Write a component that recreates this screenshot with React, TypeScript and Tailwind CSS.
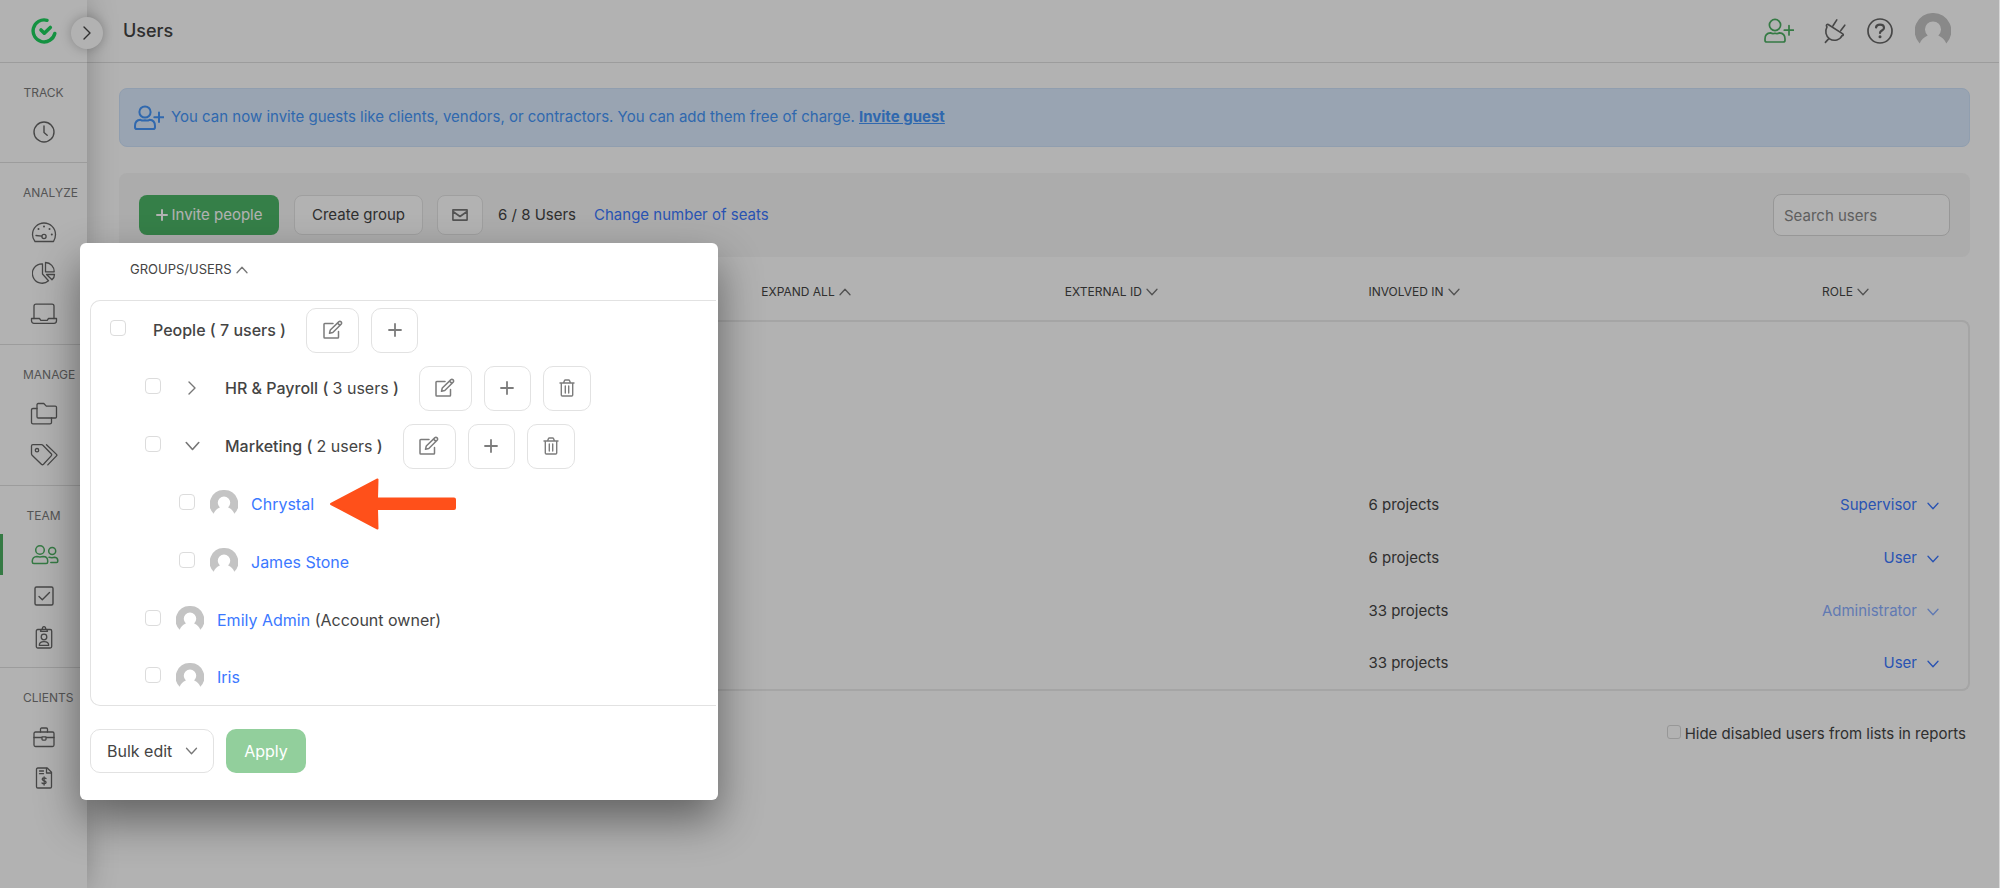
import type { ReactNode } from 'react'

type IconProps = { className?: string }

function Svg({ className = '', box = '0 0 24 24', width = 1.5, children }: { className?: string; box?: string; width?: number; children: ReactNode }) {
  return (
    <svg className={className} viewBox={box} fill="none" stroke="currentColor" strokeWidth={width} strokeLinecap="round" strokeLinejoin="round" aria-hidden="true">
      {children}
    </svg>
  )
}

const ChevronDown = ({ className }: IconProps) => (
  <Svg className={className} box="0 0 12 8" width={1.3}><path d="M1 1.2 6 6.8 11 1.2" /></Svg>
)
const ChevronUp = ({ className }: IconProps) => (
  <Svg className={className} box="0 0 12 8" width={1.3}><path d="M1 6.8 6 1.2 11 6.8" /></Svg>
)
const ChevronRight = ({ className }: IconProps) => (
  <Svg className={className} box="0 0 8 14" width={1.4}><path d="M1 1 7 7 1 13" /></Svg>
)

const UserPlus = ({ className, width = 1.7 }: IconProps & { width?: number }) => (
  <Svg className={className} box="0 0 30 26" width={width}>
    <circle cx="11" cy="7" r="5.6" />
    <path d="M6.5 14.8C3 15 1 17.5 1 21v1.2c0 1.2.7 1.8 1.8 1.8h16.4c1.1 0 1.8-.6 1.8-1.8V21c0-3.5-2-6-5.5-6.2-1.5.9-3 .9-4.5.4-1.5.5-3 .5-4.5-.4Z" />
    <path d="M25 7.5v9.5M20.3 12.2H29.7" />
  </Svg>
)

const Clock = () => (
  <Svg className="size-6" width={1.4}><circle cx="12" cy="12" r="10" /><path d="M12 6v6.5l3.2 2.7" /></Svg>
)
const Gauge = () => (
  <Svg className="size-7" box="0 0 28 28" width={1.3}>
    <path d="M5 23.5c-1.8-2.2-2.5-4.5-2.5-7A11.5 11.5 0 0 1 25.5 16.5c0 2.5-.7 4.8-2 7Z" />
    <circle cx="14" cy="18.5" r="2.1" />
    <path d="M6 17.5l5.8.7" />
    <path d="M8.5 11h.01M14 8.5h.01M19.5 11h.01M21.8 16.5h.01" strokeWidth="2" />
  </Svg>
)
const Pie = () => (
  <Svg className="size-6" width={1.3}>
    <path d="M10.5 2.8a9.7 9.7 0 1 0 6 17L10.5 13Z" />
    <path d="M13.5 1.5v9.3h8.7a9 9 0 0 0-8.7-9.3Z" />
    <path d="M14.5 13.5h8c0 2-.8 3.8-2.5 5.2Z" />
  </Svg>
)
const Laptop = () => (
  <Svg className="h-6 w-7" box="0 0 28 24" width={1.3}>
    <path d="M4 16.5V4.2C4 3 4.7 2.2 6 2.2h16c1.3 0 2 .8 2 2v12.3" />
    <path d="M1.5 16.5h8l1.3 1.8h6.4l1.3-1.8h8v2.3c0 1.5-1 2.5-2.5 2.5H4c-1.5 0-2.5-1-2.5-2.5Z" />
  </Svg>
)
const Folders = () => (
  <Svg className="h-6 w-7" box="0 0 28 24" width={1.3}>
    <path d="M7 2.7c0-.7.5-1.2 1.2-1.2h5.6l2.5 2.6h9c.7 0 1.2.5 1.2 1.2v9.5c0 .7-.5 1.2-1.2 1.2H8.2c-.7 0-1.2-.5-1.2-1.2Z" />
    <path d="M7 6.5H3c-.9 0-1.5.5-1.5 1.3v12.7c0 .8.6 1.3 1.5 1.3h17c.9 0 1.5-.5 1.5-1.3V16" />
  </Svg>
)
const Tags = () => (
  <Svg className="h-6 w-7" box="0 0 28 24" width={1.3}>
    <path d="M1.5 3c0-.9.5-1.4 1.4-1.4h8.6c.6 0 1 .2 1.4.6l8.3 8.6c.7.7.7 1.4 0 2.1l-7.7 8.3c-.7.7-1.4.7-2.1 0l-9.3-9c-.4-.4-.6-.8-.6-1.4Z" />
    <circle cx="7" cy="7.2" r="1.7" />
    <path d="M16.5 1.8l10 9.6c.5.5.5 1 0 1.5l-8.7 9" />
  </Svg>
)
const Team = () => (
  <Svg className="h-6 w-7" box="0 0 28 24" width={1.5}>
    <circle cx="9" cy="7" r="4.3" />
    <circle cx="21.2" cy="8" r="3.5" />
    <path d="M5.8 13.5C3 13.5 1.3 15.5 1.3 18v1c0 1 .5 1.5 1.5 1.5h12.4c1 0 1.5-.5 1.5-1.5v-1c0-2.5-1.7-4.5-4.5-4.5-2.1.6-4.3.6-6.4 0Z" />
    <path d="M18 14.3c2.2.5 4 .5 5.8-.1 1.9.2 3 1.7 3 3.6v.5c0 .7-.5 1.2-1.2 1.2h-5.8" />
  </Svg>
)
const CheckSquare = () => (
  <Svg className="size-6" width={1.4}><rect x="3" y="3" width="18" height="18" rx="1.5" /><path d="M7 12.5l3.3 3.2L17.5 8.5" /></Svg>
)
const Badge = () => (
  <Svg className="size-6" width={1.3}>
    <rect x="4.3" y="4.5" width="15.4" height="18.5" rx="1.5" />
    <path d="M8.5 6.3c0-2 1.2-2.3 2-2.5a1.6 1.6 0 1 1 3 0c.8.2 2 .5 2 2.5Z" />
    <circle cx="12" cy="12" r="2.8" />
    <path d="M7.3 20.3c0-3 1.7-3.6 4.7-3.6s4.7.6 4.7 3.6Z" />
  </Svg>
)
const Briefcase = () => (
  <Svg className="size-6" width={1.3}>
    <rect x="2" y="7" width="20" height="14.5" rx="1.5" />
    <path d="M8.5 7V4.3c0-.8.4-1.3 1.2-1.3h4.6c.8 0 1.2.5 1.2 1.3V7M2 12.5h8M14 12.5h8M10 11.8h4v2.5c0 .5-.3.8-.8.8h-2.4c-.5 0-.8-.3-.8-.8Z" />
  </Svg>
)
const Invoice = () => (
  <Svg className="size-6" width={1.3}>
    <path d="M4.5 3.3c0-.8.5-1.3 1.3-1.3h9.4l4.3 4.3v14.4c0 .8-.5 1.3-1.3 1.3H5.8c-.8 0-1.3-.5-1.3-1.3Z" />
    <path d="M14.5 2.5V7H19M7.5 5h4M7.5 7.7h4M14 12.5c-.8-.8-3.8-.9-3.8.8 0 1.9 3.9 1 3.9 3 0 1.8-3.2 1.7-4.1.7M12.1 10.8v8.2" />
  </Svg>
)
const Plug = ({ className }: IconProps) => (
  <Svg className={className} box="0 0 24 28" width={1.6}>
    <path d="M5.2 7.5 19.8 16.9C20.8 17.6 20.2 18.9 19 18.6 17.5 22.8 11 24.8 6.6 21.8 2.6 19 1.8 14 4 9.9 2.6 8.8 3.9 6.7 5.2 7.5ZM5.8 21.6 2.4 25.4M10 8.8 13.8 2.9M17.8 13.6 21.8 8.2" />
  </Svg>
)
const Edit = () => (
  <Svg className="size-5" box="0 0 20 20" width={1.5}>
    <path d="M10 3.5H1.8c-.5 0-.8.3-.8.8v12.9c0 .5.300.8.800.8h12.900c.5 0 .8-.3.8-.8V11.5" />
    <path d="m6.500 13.300.8-3.300 8.400-8.100c.7-.7 1.700-.7 2.400 0s.7 1.700 0 2.400L9.800 12.500ZM14.600 3.100l2.300 2.300" />
  </Svg>
)
const Plus = () => (
  <Svg className="size-[14px]" box="0 0 14 14" width={1.8}><path d="M7 1v12M1 7h12" /></Svg>
)
const Trash = () => (
  <Svg className="h-[18px] w-4" box="0 0 16 18" width={1.4}>
    <path d="M1 4h14M4.600 3.700 5.400 1.800c.2-.5.5-.8 1-.8h3.200c.5 0 .8.300 1 .8l.8 1.900M2.300 4v12c0 .600.400 1 1 1h9.400c.6 0 1-.4 1-1V4M6.300 7v7M9.700 7v7" />
  </Svg>
)

function Avatar({ className = '' }: IconProps) {
  return (
    <svg className={className} viewBox="0 0 36 36" aria-hidden="true">
      <path fill="#c4c4c4" d="M18 0a18 18 0 0 0-13.3 30.5c1.3-3.7 4.3-6.600 8-8.100a8 8 0 1 1 10.600 0c3.700 1.500 6.700 4.400 8 8.100A18 18 0 0 0 18 0Z" />
    </svg>
  )
}

function Logo() {
  return (
    <svg className="size-[26px]" viewBox="0 0 26 26" fill="none" stroke="#1dd15d" strokeWidth="3.4" strokeLinecap="round" strokeLinejoin="round" aria-hidden="true">
      <path d="M16 2.3A11 11 0 1 0 23.8 15.5" />
      <path d="M10 12l3.3 3.2 6-5.7" strokeWidth="3.6" />
    </svg>
  )
}

const sections = [
  { title: 'TRACK', items: [{ name: 'Time', icon: <Clock /> }] },
  { title: 'ANALYZE', items: [{ name: 'Dashboard', icon: <Gauge /> }, { name: 'Reports', icon: <Pie /> }, { name: 'Activity', icon: <Laptop /> }] },
  { title: 'MANAGE', items: [{ name: 'Projects', icon: <Folders /> }, { name: 'Tags', icon: <Tags /> }] },
  { title: 'TEAM', items: [{ name: 'Users', icon: <Team />, active: true }, { name: 'Approvals', icon: <CheckSquare /> }, { name: 'Attendance', icon: <Badge /> }] },
  { title: 'CLIENTS', items: [{ name: 'Clients', icon: <Briefcase /> }, { name: 'Invoices', icon: <Invoice /> }] },
]

function Sidebar() {
  return (
    <aside className="relative z-10 w-[87px] shrink-0 bg-white shadow-[0_0_28px_rgba(0,0,0,0.25)]">
      <div className="flex h-[63px] items-center justify-center border-b border-[#e0e0e0]">
        <Logo />
      </div>
      <button aria-label="Expand menu" className="absolute left-[71px] top-[17px] flex size-8 items-center justify-center rounded-full bg-white text-[#444] shadow-[0_0_12px_rgba(0,0,0,0.25)]">
        <ChevronRight className="h-[14px] w-2" />
      </button>
      <nav>
        {sections.map((s) => (
          <div key={s.title} className="border-b border-[#e0e0e0] pt-5 pb-[10px] last:border-b-0">
            <h2 className="mb-2 whitespace-nowrap px-[23px] text-center text-[12px] leading-5 text-[#7a7a7a]">{s.title}</h2>
            {s.items.map((it) => (
              <a
                key={it.name}
                href="#"
                aria-label={it.name}
                className={
                  'active' in it
                    ? 'flex h-[41px] items-center justify-center border-l-3 border-[#4caf62] pr-px text-[#4caf62]'
                    : 'flex h-[41px] items-center justify-center text-[#666]'
                }
              >
                {it.icon}
              </a>
            ))}
          </div>
        ))}
      </nav>
    </aside>
  )
}

function Header() {
  return (
    <header className="flex h-[63px] items-center justify-between border-b border-[#e0e0e0] pr-12 pl-9">
      <h1 className="text-lg font-medium text-[#444]">Users</h1>
      <div className="flex items-center text-[#666]">
        <button aria-label="Invite" className="mr-[29px] text-[#4caf62]"><UserPlus className="h-[26px] w-[30px]" /></button>
        <button aria-label="Integrations" className="mr-5"><Plug className="h-7 w-6" /></button>
        <button aria-label="Help" className="mr-[22px]">
          <Svg className="size-[26px]" box="0 0 26 26" width={1.7}>
            <circle cx="13" cy="13" r="12" />
            <path d="M9 9.5c.3-2 2-2.8 4-2.8s4 1 4 3.2c0 2.6-4 2.6-4 5" strokeWidth="2.2" />
            <path d="M13 18.8h.01" strokeWidth="3" />
          </Svg>
        </button>
        <button aria-label="Account"><Avatar className="size-9" /></button>
      </div>
    </header>
  )
}

function Toolbar() {
  return (
    <div className="mt-[26px] flex items-center rounded-lg bg-[#f7f7f7] px-5 py-[21px] text-[15px] text-[#444]">
      <button className="flex h-10 w-[140px] items-center justify-center gap-1 rounded-lg bg-[#4db768] text-white">
        <Svg className="size-3" box="0 0 12 12" width={2}><path d="M6 1v10M1 6h10" /></Svg>
        Invite people
      </button>
      <button className="ml-[15px] h-10 w-[129px] rounded-lg border border-[#e4e4e4] bg-white">Create group</button>
      <button aria-label="Email users" className="ml-[14px] flex h-10 w-[46px] items-center justify-center rounded-lg border border-[#e4e4e4] bg-white text-[#777]">
        <Svg className="h-3 w-4" box="0 0 16 12" width={1.6}><path d="M.9.9h14.2v10.2H.9ZM1 2.5 8 7.5l7-5" /></Svg>
      </button>
      <span className="ml-[15px]">6 / 8 Users</span>
      <a href="#" className="ml-[18px] text-[#3b78ff]">Change number of seats</a>
      <input
        type="search"
        aria-label="Search users"
        placeholder="Search users"
        className="ml-auto h-[42px] w-[177px] rounded-lg border border-[#d8d8d8] bg-white px-[10px] placeholder:text-[#888]"
      />
    </div>
  )
}

const groupRows = ['people', 'hr', 'marketing']
const userRows = [
  { id: 'chrystal', projects: '6 projects', role: 'Supervisor' },
  { id: 'james', projects: '6 projects', role: 'User' },
  { id: 'emily', projects: '33 projects', role: 'Administrator', locked: true },
  { id: 'iris', projects: '33 projects', role: 'User' },
]

const cell = 'border-[#ececec] p-0 group-first:border-t-2 group-last:border-b-2 first:border-l-2 last:border-r-2 group-first:first:rounded-tl-lg group-first:last:rounded-tr-lg group-last:first:rounded-bl-lg group-last:last:rounded-br-lg'

function UsersTable() {
  return (
    <table className="w-full table-fixed border-separate border-spacing-0 text-left text-[15px] text-[#444]">
      <thead>
        <tr className="h-[63px] text-[12px] [&>th]:p-0 [&>th]:pt-[6px] [&>th]:font-normal">
          <th className="w-[34.7%]" aria-label="Groups/users" />
          <th className="w-[16.4%]"><span className="inline-flex items-center gap-1">EXPAND ALL <ChevronUp className="h-2 w-3 text-[#777]" /></span></th>
          <th className="w-[16.4%]"><span className="inline-flex items-center gap-1">EXTERNAL ID <ChevronDown className="h-2 w-3 text-[#777]" /></span></th>
          <th className="w-[16.4%]"><span className="inline-flex items-center gap-1">INVOLVED IN <ChevronDown className="h-2 w-3 text-[#777]" /></span></th>
          <th className="text-right"><span className="mr-[101px] inline-flex items-center gap-1">ROLE <ChevronDown className="h-2 w-3 text-[#777]" /></span></th>
        </tr>
      </thead>
      <tbody>
        {groupRows.map((id) => (
          <tr key={id} className="group h-[53px]">
            <td className={cell} /><td className={cell} /><td className={cell} /><td className={cell} /><td className={cell} />
          </tr>
        ))}
        {userRows.map((u) => (
          <tr key={u.id} className="group h-[53px]">
            <td className={cell} />
            <td className={cell} />
            <td className={cell} />
            <td className={cell}>{u.projects}</td>
            <td className={cell}>
              <label className={u.locked ? 'mr-[29px] flex items-center justify-end gap-[10px] text-[#3b78ff]/60' : 'mr-[29px] flex items-center justify-end gap-[10px] text-[#3b78ff]'}>
                <select aria-label={'Role of ' + u.id} className="appearance-none bg-transparent text-right [field-sizing:content]">
                  <option>{u.role}</option>
                </select>
                <ChevronDown className="h-2 w-3" />
              </label>
            </td>
          </tr>
        ))}
      </tbody>
    </table>
  )
}

const buttonBox = 'flex h-[45px] items-center justify-center rounded-[10px] border border-[#e2e2e2] bg-white text-[#7c7c7c]'

function GroupActions({ removable }: { removable?: boolean }) {
  return (
    <div className="ml-5 flex gap-3">
      <button aria-label="Edit group" className={buttonBox + ' w-[53px]'}><Edit /></button>
      <button aria-label="Add to group" className={buttonBox + ' w-[47px]'}><Plus /></button>
      {removable && <button aria-label="Delete group" className={buttonBox + ' w-[48px]'}><Trash /></button>}
    </div>
  )
}

function Check({ label }: { label: string }) {
  return <input type="checkbox" aria-label={label} className="mb-1 size-4 shrink-0 appearance-none rounded-[4px] border border-[#dcdcdc] bg-white" />
}

function Group({ name, count, open, root }: { name: string; count: string; open?: boolean; root?: boolean }) {
  return (
    <li className={root ? 'flex h-[58px] items-center pl-[19px]' : 'flex h-[58px] items-center pl-[54px]'}>
      <Check label={name} />
      {!root && (
        <button aria-label={'Toggle ' + name} className="ml-[23px] flex w-4 justify-center text-[#777]">
          {open ? <ChevronDown className="h-[10px] w-[15px]" /> : <ChevronRight className="h-[14px] w-2" />}
        </button>
      )}
      <span className={root ? 'ml-[27px] font-medium' : 'ml-[25px] font-medium'}>
        {name} ( <span className={root ? '' : 'font-normal'}>{count}</span> )
      </span>
      <GroupActions removable={!root} />
    </li>
  )
}

function User({ name, note, nested, children }: { name: string; note?: string; nested?: boolean; children?: ReactNode }) {
  return (
    <li className={nested ? 'flex h-[58px] items-center pl-[88px]' : 'flex h-[58px] items-center pl-[54px] last:h-14'}>
      <Check label={name} />
      <Avatar className="ml-[15px] size-7" />
      <span className="ml-[13px]">
        <a href="#" className="text-[#3b78ff]">{name}</a>
        {note && ' ' + note}
      </span>
      {children}
    </li>
  )
}

function GroupsPanel() {
  return (
    <section className="absolute left-20 top-[243px] z-30 w-[638px] rounded-md bg-white pb-[27px] pl-[10px] text-base text-[#444] shadow-[0_20px_44px_rgba(0,0,0,0.45)]">
      <h2 className="flex h-[57px] items-center gap-1 pb-1 pl-10 text-[13px]">
        GROUPS/USERS <ChevronUp className="h-2 w-3 text-[#777]" />
      </h2>
      <ul className="mr-[2px] rounded-l-[10px] border border-r-0 border-[#e2e2e2]">
        <Group name="People" count="7 users" root />
        <Group name="HR & Payroll" count="3 users" />
        <Group name="Marketing" count="2 users" open />
        <User name="Chrystal" nested>
          <svg className="ml-4 h-[52px] w-[126px]" viewBox="0 0 126 52" aria-hidden="true">
            <path fill="#ff501a" stroke="#ff501a" strokeWidth="2" strokeLinejoin="round" d="M1 26 47.5 1.5 47 20.5H124a1 1 0 0 1 1 1v8.5a1 1 0 0 1-1 1H47l.5 19.5Z" />
          </svg>
        </User>
        <User name="James Stone" nested />
        <User name="Emily Admin" note="(Account owner)" />
        <User name="Iris" />
      </ul>
      <div className="mt-[23px] flex gap-3">
        <label className="relative flex items-center">
          <select aria-label="Bulk edit" className="h-[44px] w-[124px] appearance-none rounded-[10px] border border-[#e2e2e2] bg-white px-4">
            <option>Bulk edit</option>
          </select>
          <ChevronDown className="pointer-events-none absolute right-4 h-2 w-[13px] text-[#777]" />
        </label>
        <button className="h-[44px] w-20 rounded-[10px] bg-[#92cf9c] text-white">Apply</button>
      </div>
    </section>
  )
}

export default function App() {
  return (
    <div className="relative flex min-h-screen border-r border-[#d8d8d8] bg-white font-['Inter','Open_Sans',sans-serif]">
      <Sidebar />
      <main className="min-w-0 flex-1">
        <Header />
        <div className="pr-[29px] pl-8">
          <div className="mt-[25px] flex h-[59px] items-center rounded-lg border border-[#cfe3fb] bg-[#dbebff] px-[14px] text-[15px] text-[#4596fa]">
            <UserPlus className="mr-[7px] h-[26px] w-[30px]" width={2} />
            <p>
              You can now invite guests like clients, vendors, or contractors. You can add them free of charge.{' '}
              <a href="#" className="font-bold underline">Invite guest</a>
            </p>
          </div>
          <Toolbar />
          <UsersTable />
          <label className="mt-8 mr-1 flex items-center justify-end gap-1 text-[15px] text-[#444]">
            <input type="checkbox" className="mb-1 size-[14px] appearance-none rounded-[3px] border border-[#d8d8d8]" />
            Hide disabled users from lists in reports
          </label>
        </div>
      </main>
      <div className="pointer-events-none absolute inset-0 z-20 bg-black/30" />
      <GroupsPanel />
    </div>
  )
}
